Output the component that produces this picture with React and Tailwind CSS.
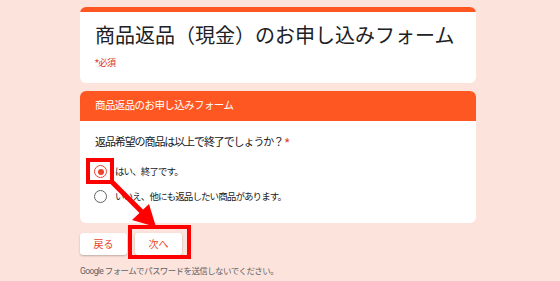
import React from 'react';

// Google Forms style page with red annotation overlay
const font = { fontFamily: 'Roboto, "Noto Sans CJK JP", sans-serif' };

const Radio = ({ checked }) => (
  <span
    className={`flex h-[13px] w-[13px] shrink-0 items-center justify-center rounded-full border-[1.5px] ${
      checked ? 'border-[#e8452c]' : 'border-[#5f6368]'
    }`}
  >
    {checked && <span className="h-[6px] w-[6px] rounded-full bg-[#e8452c]" />}
  </span>
);

const App = () => {
  return (
    <div className="relative h-[281px] w-[560px] overflow-hidden bg-[#fce4dc]" style={font}>
      <div className="ml-[80px] w-[396px] pt-[7px]">
        {/* Title card */}
        <div className="overflow-hidden rounded-[6px] bg-white">
          <div className="h-[5px] bg-[#ff5722]" />
          <div className="px-[15px] pt-[11px] pb-[14px]">
            <h1 className="text-[20px] leading-[26px] text-[#202124]">商品返品（現金）のお申し込みフォーム</h1>
            <p className="mt-[8px] text-[9px] leading-[12px] tracking-[-0.5px] text-[#d93025]">*必須</p>
          </div>
        </div>

        {/* Section card */}
        <div className="mt-[8px] overflow-hidden rounded-[6px] bg-white">
          <div className="flex h-[30px] items-center bg-[#ff5722] px-[15px] text-[10.5px] tracking-[-0.6px] text-white">
            商品返品のお申し込みフォーム
          </div>
          <div className="px-[15px] pt-[14px] pb-[20px]">
            <p className="text-[11px] leading-[16px] tracking-[-1.1px] text-[#202124]">
              返品希望の商品は以上で終了でしょうか？ <span className="text-[#d93025]">*</span>
            </p>
            <div className="mt-[14px] flex flex-col gap-[12px]">
              <label className="flex items-center gap-[8px] text-[9.5px] leading-[13px] tracking-[-0.9px] text-[#202124]">
                <span className="-ml-[1px]"><Radio checked /></span>
                はい、終了です。
              </label>
              <label className="flex items-center gap-[8px] text-[9.5px] leading-[13px] tracking-[-0.9px] text-[#202124]">
                <span className="-ml-[1px]"><Radio /></span>
                いいえ、他にも返品したい商品があります。
              </label>
            </div>
          </div>
        </div>

        {/* Buttons */}
        <div className="mt-[10px] flex gap-[8px]">
          <button className="h-[22px] w-[47px] rounded-[3px] bg-white text-[10px] text-[#e8452c] shadow-[0_1px_2px_rgba(0,0,0,0.25)]">
            戻る
          </button>
          <button className="h-[22px] w-[47px] rounded-[3px] bg-white text-[10px] text-[#e8452c] shadow-[0_1px_2px_rgba(0,0,0,0.25)]">
            次へ
          </button>
        </div>

        <p className="mt-[10px] text-[8.5px] leading-[12px] tracking-[-0.6px] text-[#5f6368]">Google フォームでパスワードを送信しないでください。</p>
      </div>

      {/* Annotation overlay */}
      <svg className="pointer-events-none absolute inset-0" width="560" height="281">
        <rect x="88" y="160" width="24" height="22" fill="none" stroke="#ff0000" strokeWidth="4" />
        <rect x="130" y="227" width="59" height="30" fill="none" stroke="#ff0000" strokeWidth="4" />
        <line x1="110" y1="180" x2="143" y2="213" stroke="#ff0000" strokeWidth="5" />
        <polygon points="156,227 132,220 149,204" fill="#ff0000" />
      </svg>
    </div>
  );
};

export default App;
